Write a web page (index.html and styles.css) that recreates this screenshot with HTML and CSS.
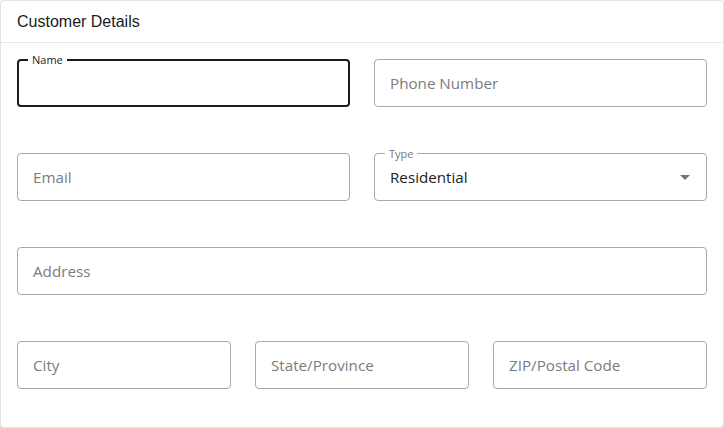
FILE: index.html
```html
<!DOCTYPE html>
<html>
<head>
<meta charset="utf-8">
<link rel="stylesheet" href="styles.css">
</head>
<body>
<div class="card">
  <div class="card-header">Customer Details</div>
  <div class="card-body">
    <div class="row two">
      <div class="field focused">
        <span class="label">Name</span>
      </div>
      <div class="field"><span class="placeholder">Phone Number</span></div>
    </div>
    <div class="row two">
      <div class="field"><span class="placeholder">Email</span></div>
      <div class="field select">
        <span class="label gray">Type</span>
        <span class="value">Residential</span>
        <svg class="caret" width="10" height="5" viewBox="0 0 10 5"><path d="M0 0 L10 0 L5 5 Z" fill="#757575"/></svg>
      </div>
    </div>
    <div class="row one">
      <div class="field"><span class="placeholder">Address</span></div>
    </div>
    <div class="row three">
      <div class="field"><span class="placeholder">City</span></div>
      <div class="field"><span class="placeholder">State/Province</span></div>
      <div class="field"><span class="placeholder">ZIP/Postal Code</span></div>
    </div>
  </div>
</div>
</body>
</html>
```
FILE: styles.css
```css
html, body {
  margin: 0;
  padding: 0;
  background: #ffffff;
}
.card {
  box-sizing: border-box;
  width: 724px;
  height: 428px;
  border: 1px solid #e3e3e3;
  border-radius: 4px;
  box-shadow: 0 1px 2px rgba(0,0,0,0.25);
  background: #fff;
  overflow: hidden;
}
.card-header {
  box-sizing: border-box;
  height: 42px;
  padding: 12px 0 0 16px;
  border-bottom: 1px solid #e8e8e8;
  font-family: "Liberation Sans", Arial, sans-serif;
  font-size: 16px;
  color: #1a1a1a;
}
.card-body {
  padding: 16px 16px 0 16px;
  display: flex;
  flex-direction: column;
  gap: 46px;
}
.row {
  display: grid;
  column-gap: 24px;
}
.row.two { grid-template-columns: 1fr 1fr; }
.row.one { grid-template-columns: 1fr; }
.row.three { grid-template-columns: 1fr 1fr 1fr; }
.field {
  position: relative;
  box-sizing: border-box;
  height: 48px;
  border: 1px solid #a9a9a9;
  border-radius: 4px;
  display: flex;
  align-items: center;
  padding: 0 15px;
  font-family: "Open Sans", sans-serif;
  font-size: 15.2px;
}
.field.focused {
  border: 2px solid #1c1c1c;
  padding: 0 14px;
}
.placeholder {
  color: #7c7c7c;
}
.value {
  color: #222;
  flex: 1;
}
.label {
  position: absolute;
  top: -7px;
  left: 10px;
  padding: 0 4px;
  background: #fff;
  font-family: "Open Sans", sans-serif;
  font-size: 11px;
  line-height: 14px;
  color: #1c1c1c;
}
.field.focused .label {
  top: -8px;
  left: 9px;
}
.label.gray {
  color: #777;
}
.caret {
  margin-right: 1px;
}
```
